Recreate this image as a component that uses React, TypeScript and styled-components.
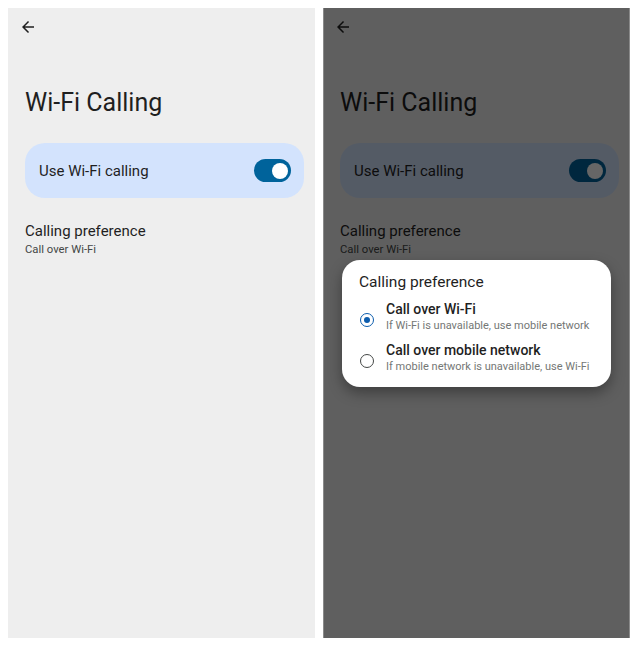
import styled, { createGlobalStyle } from "styled-components";

const GlobalStyle = createGlobalStyle`
  html, body {
    margin: 0;
    padding: 0;
    background: #ffffff;
  }
  body {
    font-family: Roboto, "Noto Sans", "Liberation Sans", sans-serif;
    -webkit-font-smoothing: antialiased;
  }
`;

const Page = styled.div`
  display: flex;
  gap: 8px;
  padding: 8px;
  width: 640px;
  height: 646px;
  box-sizing: border-box;
`;

const Screen = styled.div`
  position: relative;
  width: 307px;
  height: 630px;
  background: #eeeeee;
  padding: 0 11px 0 17px;
  box-sizing: border-box;
  overflow: hidden;
`;

const TopBar = styled.div`
  display: flex;
  align-items: center;
  height: 38px;
  margin-left: -6px;
  color: #1f1f1f;
`;

const Title = styled.h1`
  margin: 41px 0 0;
  font-size: 25px;
  line-height: 32px;
  font-weight: 400;
  color: #1f1f1f;
`;

const ToggleCard = styled.div`
  display: flex;
  align-items: center;
  justify-content: space-between;
  margin-top: 24px;
  height: 55px;
  padding: 0 13px 0 14px;
  border-radius: 20px;
  background: #d3e3fd;
`;

const CardLabel = styled.span`
  font-size: 15px;
  color: #1f1f1f;
`;

const Track = styled.div<{ $on: boolean }>`
  display: flex;
  align-items: center;
  justify-content: ${(p) => (p.$on ? "flex-end" : "flex-start")};
  width: 37px;
  height: 23px;
  padding: 0 3px;
  box-sizing: border-box;
  border-radius: 12px;
  background: ${(p) => (p.$on ? "#00639b" : "#e0e2ec")};
`;

const Thumb = styled.div`
  width: 16px;
  height: 16px;
  border-radius: 50%;
  background: #ffffff;
`;

const PrefItem = styled.div`
  margin-top: 23px;
  display: flex;
  flex-direction: column;
`;

const PrefTitle = styled.span`
  font-size: 15px;
  line-height: 20px;
  color: #1f1f1f;
`;

const PrefSummary = styled.span`
  font-size: 11.3px;
  line-height: 17px;
  color: #444746;
`;

const Scrim = styled.div`
  position: absolute;
  inset: 0;
  background: rgba(0, 0, 0, 0.6);
  border-left: 1px solid #8a8a8a;
  border-right: 1px solid #8a8a8a;
`;

const Dialog = styled.div`
  position: absolute;
  top: 252px;
  left: 19px;
  right: 19px;
  padding: 12px 17px 12px;
  border-radius: 18px;
  background: #ffffff;
  box-shadow: 0 6px 14px rgba(0, 0, 0, 0.35);
`;

const DialogTitle = styled.div`
  font-size: 15.5px;
  line-height: 20px;
  color: #1f1f1f;
`;

const OptionList = styled.div`
  display: flex;
  flex-direction: column;
  gap: 7px;
  margin-top: 8px;
`;

const Option = styled.div`
  display: flex;
  align-items: center;
  gap: 12px;
`;

const Radio = styled.div<{ $checked: boolean }>`
  flex: none;
  display: flex;
  align-items: center;
  justify-content: center;
  width: 14px;
  height: 14px;
  margin: 5px 0 0 1px;
  box-sizing: border-box;
  border-radius: 50%;
  border: 1.6px solid ${(p) => (p.$checked ? "#0b5cad" : "#444746")};

  &::after {
    content: "";
    display: ${(p) => (p.$checked ? "block" : "none")};
    width: 6px;
    height: 6px;
    border-radius: 50%;
    background: #0b5cad;
  }
`;

const OptionText = styled.div`
  display: flex;
  flex-direction: column;
`;

const OptionTitle = styled.span`
  font-size: 14px;
  line-height: 18px;
  font-weight: 500;
  color: #1f1f1f;
`;

const OptionSummary = styled.span`
  font-size: 11px;
  line-height: 16px;
  color: #747775;
`;

const BackArrow = () => (
  <svg width="18" height="18" viewBox="0 0 24 24" fill="currentColor">
    <path d="M20 11H7.83l5.59-5.59L12 4l-8 8 8 8 1.41-1.41L7.83 13H20v-2z" />
  </svg>
);

const options = [
  { title: "Call over Wi-Fi", summary: "If Wi-Fi is unavailable, use mobile network", checked: true },
  { title: "Call over mobile network", summary: "If mobile network is unavailable, use Wi-Fi", checked: false },
];

const WifiCallingScreen = ({ showDialog }: { showDialog?: boolean }) => (
  <Screen>
    <TopBar>
      <BackArrow />
    </TopBar>
    <Title>Wi-Fi Calling</Title>
    <ToggleCard>
      <CardLabel>Use Wi-Fi calling</CardLabel>
      <Track $on>
        <Thumb />
      </Track>
    </ToggleCard>
    <PrefItem>
      <PrefTitle>Calling preference</PrefTitle>
      <PrefSummary>Call over Wi-Fi</PrefSummary>
    </PrefItem>
    {showDialog && (
      <>
        <Scrim />
        <Dialog>
          <DialogTitle>Calling preference</DialogTitle>
          <OptionList>
            {options.map((o) => (
              <Option key={o.title}>
                <Radio $checked={o.checked} />
                <OptionText>
                  <OptionTitle>{o.title}</OptionTitle>
                  <OptionSummary>{o.summary}</OptionSummary>
                </OptionText>
              </Option>
            ))}
          </OptionList>
        </Dialog>
      </>
    )}
  </Screen>
);

export default function App() {
  return (
    <>
      <GlobalStyle />
      <Page>
        <WifiCallingScreen />
        <WifiCallingScreen showDialog />
      </Page>
    </>
  );
}
